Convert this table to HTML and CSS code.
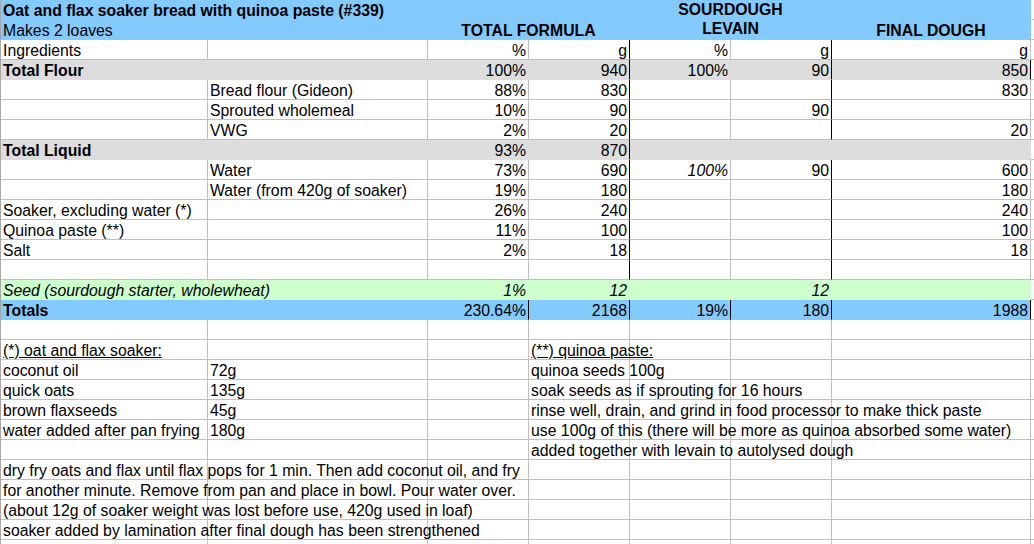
FILE: index.html
```html
<!DOCTYPE html>
<html>
<head>
<meta charset="utf-8">
<title>Oat and flax soaker bread</title>
<link rel="stylesheet" href="styles.css">
</head>
<body>
<table class="sheet">
  <colgroup>
    <col class="c-a"><col class="c-b"><col class="c-n"><col class="c-n"><col class="c-n"><col class="c-n"><col class="c-g"><col class="c-h">
  </colgroup>
  <tbody>
    <tr class="blue">
      <td class="b">Oat and flax soaker bread with quinoa paste (#339)</td><td></td><td></td><td></td>
      <td class="b mid levain" colspan="2" rowspan="2"><span class="l1">SOURDOUGH</span><span class="l2">LEVAIN</span></td>
      <td></td><td class="plain"></td>
    </tr>
    <tr class="blue">
      <td>Makes 2 loaves</td><td></td>
      <td class="b mid" colspan="2">TOTAL FORMULA</td>
      <td class="b mid">FINAL DOUGH</td><td class="plain"></td>
    </tr>
    <tr>
      <td>Ingredients</td><td></td><td class="r">%</td><td class="r bk">g</td><td class="r">%</td><td class="r bk">g</td><td class="r">g</td><td></td>
    </tr>
    <tr class="gray">
      <td class="b">Total Flour</td><td></td><td class="r">100%</td><td class="r bk">940</td><td class="r">100%</td><td class="r bk">90</td><td class="r bk">850</td><td class="plain"></td>
    </tr>
    <tr>
      <td></td><td>Bread flour (Gideon)</td><td class="r">88%</td><td class="r bk">830</td><td></td><td class="bk"></td><td class="r">830</td><td></td>
    </tr>
    <tr>
      <td></td><td>Sprouted wholemeal</td><td class="r">10%</td><td class="r bk">90</td><td></td><td class="r bk">90</td><td></td><td></td>
    </tr>
    <tr>
      <td></td><td>VWG</td><td class="r">2%</td><td class="r bk">20</td><td></td><td class="bk"></td><td class="r">20</td><td></td>
    </tr>
    <tr class="gray">
      <td class="b">Total Liquid</td><td></td><td class="r">93%</td><td class="r bk">870</td><td></td><td></td><td></td><td class="plain"></td>
    </tr>
    <tr>
      <td></td><td>Water</td><td class="r">73%</td><td class="r bk">690</td><td class="r i">100%</td><td class="r bk">90</td><td class="r">600</td><td></td>
    </tr>
    <tr>
      <td></td><td>Water (from 420g of soaker)</td><td class="r">19%</td><td class="r bk">180</td><td></td><td class="bk"></td><td class="r">180</td><td></td>
    </tr>
    <tr>
      <td>Soaker, excluding water (*)</td><td></td><td class="r">26%</td><td class="r bk">240</td><td></td><td class="bk"></td><td class="r">240</td><td></td>
    </tr>
    <tr>
      <td>Quinoa paste (**)</td><td></td><td class="r">11%</td><td class="r bk">100</td><td></td><td class="bk"></td><td class="r">100</td><td></td>
    </tr>
    <tr>
      <td>Salt</td><td></td><td class="r">2%</td><td class="r bk">18</td><td></td><td class="bk"></td><td class="r">18</td><td></td>
    </tr>
    <tr>
      <td></td><td></td><td></td><td class="bk"></td><td></td><td class="bk"></td><td></td><td></td>
    </tr>
    <tr class="green">
      <td class="i">Seed (sourdough starter, wholewheat)</td><td></td><td class="r i">1%</td><td class="r i">12</td><td></td><td class="r i">12</td><td></td><td class="plain"></td>
    </tr>
    <tr class="blue">
      <td class="b">Totals</td><td></td><td class="r bk">230.64%</td><td class="r bk">2168</td><td class="r bk">19%</td><td class="r bk">180</td><td class="r bk">1988</td><td class="plain"></td>
    </tr>
    <tr>
      <td></td><td></td><td></td><td></td><td></td><td></td><td></td><td></td>
    </tr>
    <tr>
      <td class="u">(*) oat and flax soaker:</td><td></td><td></td><td class="u">(**) quinoa paste:</td><td></td><td></td><td></td><td></td>
    </tr>
    <tr>
      <td>coconut oil</td><td>72g</td><td></td><td>quinoa seeds 100g</td><td></td><td></td><td></td><td></td>
    </tr>
    <tr>
      <td>quick oats</td><td>135g</td><td></td><td>soak seeds as if sprouting for 16 hours</td><td></td><td></td><td></td><td></td>
    </tr>
    <tr>
      <td>brown flaxseeds</td><td>45g</td><td></td><td>rinse well, drain, and grind in food processor to make thick paste</td><td></td><td></td><td></td><td></td>
    </tr>
    <tr>
      <td>water added after pan frying</td><td>180g</td><td></td><td>use 100g of this (there will be more as quinoa absorbed some water)</td><td></td><td></td><td></td><td></td>
    </tr>
    <tr>
      <td></td><td></td><td></td><td>added together with levain to autolysed dough</td><td></td><td></td><td></td><td></td>
    </tr>
    <tr>
      <td>dry fry oats and flax until flax pops for 1 min. Then add coconut oil, and fry</td><td></td><td></td><td></td><td></td><td></td><td></td><td></td>
    </tr>
    <tr>
      <td>for another minute. Remove from pan and place in bowl. Pour water over.</td><td></td><td></td><td></td><td></td><td></td><td></td><td></td>
    </tr>
    <tr>
      <td>(about 12g of soaker weight was lost before use, 420g used in loaf)</td><td></td><td></td><td></td><td></td><td></td><td></td><td></td>
    </tr>
    <tr>
      <td>soaker added by lamination after final dough has been strengthened</td><td></td><td></td><td></td><td></td><td></td><td></td><td></td>
    </tr>
    <tr>
      <td></td><td></td><td></td><td></td><td></td><td></td><td></td><td></td>
    </tr>
  </tbody>
</table>
</body>
</html>
```

FILE: styles.css
```css
html, body {
  margin: 0;
  padding: 0;
  background: #ffffff;
  overflow: hidden;
}

.sheet {
  table-layout: fixed;
  border-collapse: separate;
  border-spacing: 0;
  width: 1071px;
  border-left: 1px solid #a8a8a8;
  font-family: "Liberation Sans", Arial, sans-serif;
  font-size: 15.8px;
  color: #000000;
}

.c-a { width: 207px; }
.c-b { width: 220px; }
.c-n { width: 101px; }
.c-g { width: 199px; }
.c-h { width: 40px; }

.sheet tr {
  height: 20px;
}

.sheet td {
  box-sizing: border-box;
  height: 20px;
  padding: 2px 2px 0 2px;
  line-height: 17px;
  vertical-align: top;
  white-space: nowrap;
  overflow: visible;
  border-right: 1px solid #c0c0c0;
  border-bottom: 1px solid #c0c0c0;
}

.blue td {
  background: #83caff;
  border-color: #83caff;
}

.gray td {
  background: #dddddd;
  border-color: #dddddd;
}

.green td {
  background: #ccffcc;
  border-color: #ccffcc;
}

.sheet .plain {
  background: #ffffff;
  border-right-color: #c0c0c0;
  border-bottom-color: #c0c0c0;
}

.sheet .bk {
  border-right-color: #000000;
}

.r { text-align: right; }
.mid { text-align: center; }
.b { font-weight: bold; }
.i { font-style: italic; }
.u { text-decoration: underline; }

.sheet .levain {
  padding-top: 0;
  height: 40px;
}

.l1 {
  display: block;
  line-height: 19px;
}

.l2 {
  display: block;
  line-height: 20px;
}
```
